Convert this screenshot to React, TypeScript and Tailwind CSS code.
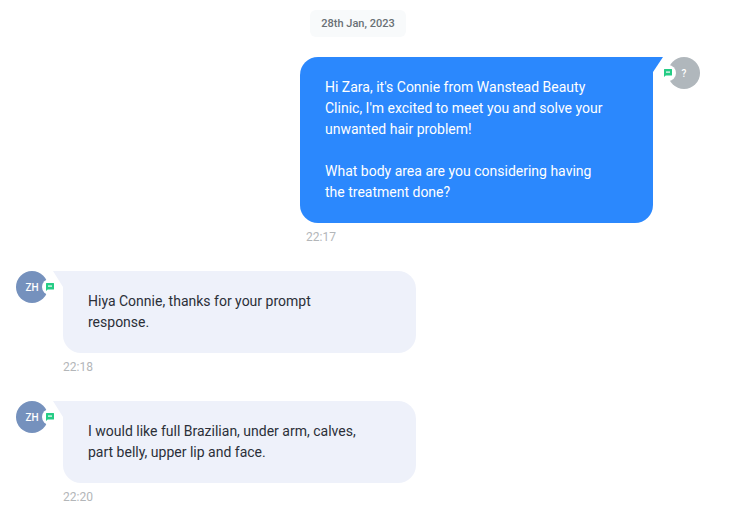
type Message = {
  id: number;
  outgoing: boolean;
  initials: string;
  lines: string[];
  time: string;
};

const messages: Message[] = [
  {
    id: 1,
    outgoing: true,
    initials: "?",
    lines: [
      "Hi Zara, it's Connie from Wanstead Beauty",
      "Clinic, I'm excited to meet you and solve your",
      "unwanted hair problem!",
      "",
      "What body area are you considering having",
      "the treatment done?",
    ],
    time: "22:17",
  },
  {
    id: 2,
    outgoing: false,
    initials: "ZH",
    lines: ["Hiya Connie, thanks for your prompt", "response."],
    time: "22:18",
  },
  {
    id: 3,
    outgoing: false,
    initials: "ZH",
    lines: ["I would like full Brazilian, under arm, calves,", "part belly, upper lip and face."],
    time: "22:20",
  },
];

function SmsBadge({ side }: { side: "left" | "right" }) {
  return (
    <span
      className={`absolute top-2 flex size-4 items-center justify-center rounded-full bg-white ${
        side === "left" ? "-left-2" : "-right-2.5"
      }`}
    >
      <svg viewBox="0 0 8 8" className="size-2" aria-hidden="true">
        <path d="M0.5 0H7.5Q8 0 8 0.5V6Q8 6.5 7.5 6.5H1.7L0 8V0.5Q0 0 0.5 0Z" fill="#25cc85" />
        <path d="M2 2.4H6V3.8H2Z" fill="#d9f7ea" />
      </svg>
    </span>
  );
}

function Avatar({ message }: { message: Message }) {
  return (
    <div
      className={`relative z-10 flex size-8 shrink-0 items-center justify-center rounded-full text-[10px] font-medium text-white ${
        message.outgoing ? "bg-[#b0b7bc]" : "bg-[#7591bd]"
      }`}
    >
      {message.initials}
      <SmsBadge side={message.outgoing ? "left" : "right"} />
    </div>
  );
}

function Tail({ outgoing }: { outgoing: boolean }) {
  return (
    <svg
      viewBox="0 0 10 16"
      aria-hidden="true"
      className={`absolute top-0 h-4 w-[10px] ${
        outgoing ? "left-full fill-[#2b88fd]" : "right-full fill-[#eef1fa]"
      }`}
    >
      <path d={outgoing ? "M0 0H10L0 15Z" : "M10 0H0L10 16Z"} />
    </svg>
  );
}

function MessageRow({ message }: { message: Message }) {
  const { outgoing } = message;
  return (
    <li className={`flex items-start gap-[15px] ${outgoing ? "flex-row-reverse pr-[14px]" : ""}`}>
      <Avatar message={message} />
      <div className="w-[353px] min-w-0">
        <div
          className={`relative rounded-b-[18px] py-5 pr-6 pl-[25px] text-sm/[21px] ${
            outgoing
              ? "rounded-tl-[18px] bg-[#2b88fd] text-white"
              : "rounded-tr-[18px] bg-[#eef1fa] text-[#2b2f38]"
          }`}
        >
          <Tail outgoing={outgoing} />
          <p className="whitespace-pre-wrap">{message.lines.join("\n")}</p>
        </div>
        <time className={`mt-1.5 block text-xs/4 text-[#b3b6b9] ${outgoing ? "pl-1.5" : ""}`}>
          {message.time}
        </time>
      </div>
    </li>
  );
}

export default function App() {
  return (
    <main className="bg-white px-4 pt-[10px] font-['Roboto',sans-serif]">
      <div className="flex justify-center pr-[14px]">
        <time
          dateTime="2023-01-28"
          className="rounded-md bg-[#f8fafb] px-[11px] pt-1.5 pb-[5px] text-[11px]/4 font-medium text-[#697075]"
        >
          28th Jan, 2023
        </time>
      </div>
      <ol className="mt-5 flex flex-col gap-[26px]">
        {messages.map((message) => (
          <MessageRow key={message.id} message={message} />
        ))}
      </ol>
    </main>
  );
}
